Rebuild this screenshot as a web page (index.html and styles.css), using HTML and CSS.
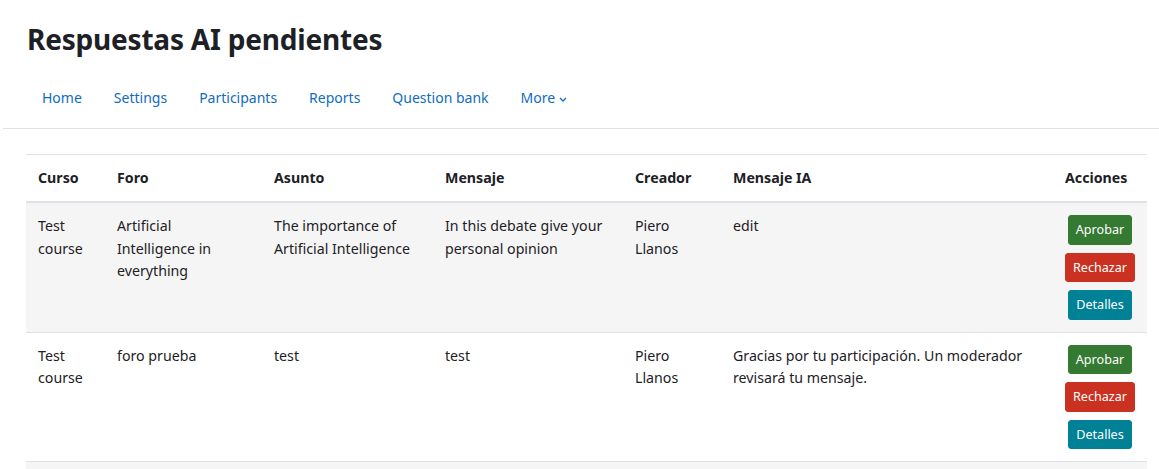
FILE: index.html
```html
<!DOCTYPE html>
<html lang="es">
<head>
<meta charset="utf-8">
<title>Respuestas AI pendientes</title>
<link rel="stylesheet" href="styles.css">
</head>
<body>
<header class="page-header">
  <h1 class="page-title">Respuestas AI pendientes</h1>
</header>
<div class="nav-wrap">
  <nav class="secondary-nav">
    <a class="nav-link" href="#">Home</a>
    <a class="nav-link" href="#">Settings</a>
    <a class="nav-link" href="#">Participants</a>
    <a class="nav-link" href="#">Reports</a>
    <a class="nav-link" href="#">Question bank</a>
    <a class="nav-link more" href="#">More <svg class="chev" width="8" height="5" viewBox="0 0 8 5"><polyline points="1,1 4,4 7,1" fill="none" stroke="currentColor" stroke-width="1.3"/></svg></a>
  </nav>
</div>
<main class="content">
  <table class="gen-table">
    <thead>
      <tr>
        <th class="c-curso">Curso</th>
        <th class="c-foro">Foro</th>
        <th class="c-asunto">Asunto</th>
        <th class="c-mensaje">Mensaje</th>
        <th class="c-creador">Creador</th>
        <th class="c-ia">Mensaje IA</th>
        <th class="c-acciones">Acciones</th>
      </tr>
    </thead>
    <tbody>
      <tr class="odd">
        <td>Test course</td>
        <td>Artificial Intelligence in everything</td>
        <td>The importance of Artificial Intelligence</td>
        <td>In this debate give your personal opinion</td>
        <td>Piero Llanos</td>
        <td>edit</td>
        <td class="actions">
          <div class="btn-stack">
            <button class="btn btn-success">Aprobar</button>
            <button class="btn btn-danger">Rechazar</button>
            <button class="btn btn-info">Detalles</button>
          </div>
        </td>
      </tr>
      <tr>
        <td>Test course</td>
        <td>foro prueba</td>
        <td>test</td>
        <td>test</td>
        <td>Piero Llanos</td>
        <td>Gracias por tu participación. Un moderador revisará tu mensaje.</td>
        <td class="actions">
          <div class="btn-stack">
            <button class="btn btn-success">Aprobar</button>
            <button class="btn btn-danger">Rechazar</button>
            <button class="btn btn-info">Detalles</button>
          </div>
        </td>
      </tr>
      <tr class="odd">
        <td>&nbsp;</td><td></td><td></td><td></td><td></td><td></td><td></td>
      </tr>
    </tbody>
  </table>
</main>
</body>
</html>
```

FILE: styles.css
```css
html, body {
  margin: 0;
  padding: 0;
  background: #fff;
}
body {
  font-family: "Noto Sans", "Open Sans", sans-serif;
  font-size: 14.2px;
  line-height: 22.5px;
  color: #1d2125;
}
.page-header {
  padding: 22px 0 0 27px;
}
.page-title {
  margin: 0;
  font-size: 28px;
  font-weight: 700;
  line-height: 34px;
  letter-spacing: -0.2px;
}
.nav-wrap {
  padding-left: 3px;
  margin-top: 23px;
}
.secondary-nav {
  display: flex;
  padding: 0 0 10px 23px;
  border-bottom: 1px solid #dee2e6;
}
.nav-link {
  color: #0f6cbf;
  font-size: 14px;
  text-decoration: none;
  padding: 8px 16px;
  display: flex;
  align-items: center;
  gap: 4px;
}
.chev {
  margin-top: 2px;
}
.content {
  padding: 25px 12px 0 26px;
}
.gen-table {
  width: 100%;
  border-collapse: collapse;
  table-layout: fixed;
}
.gen-table th,
.gen-table td {
  padding: 12px;
  text-align: left;
  vertical-align: top;
  border-top: 1px solid #dee2e6;
}
.gen-table thead th {
  font-weight: 700;
  border-bottom: 2px solid #dee2e6;
}
.gen-table tbody tr.odd {
  background: #f5f5f5;
}
.c-curso { width: 55px; }
.c-foro { width: 133px; }
.c-asunto { width: 147px; }
.c-mensaje { width: 166px; }
.c-creador { width: 74px; }
.c-ia { width: 308px; }
.c-acciones { width: 70px; }
.btn-stack {
  display: flex;
  flex-direction: column;
  align-items: center;
  gap: 8px;
}
.btn {
  font-family: inherit;
  font-size: 12.6px;
  line-height: 19.5px;
  padding: 4px 7px;
  border: 1px solid transparent;
  border-radius: 3px;
  color: #fff;
  cursor: pointer;
}
.btn-success { background: #357a32; border-color: #357a32; }
.btn-danger { background: #ca3120; border-color: #ca3120; }
.btn-info { background: #008196; border-color: #008196; }
```
